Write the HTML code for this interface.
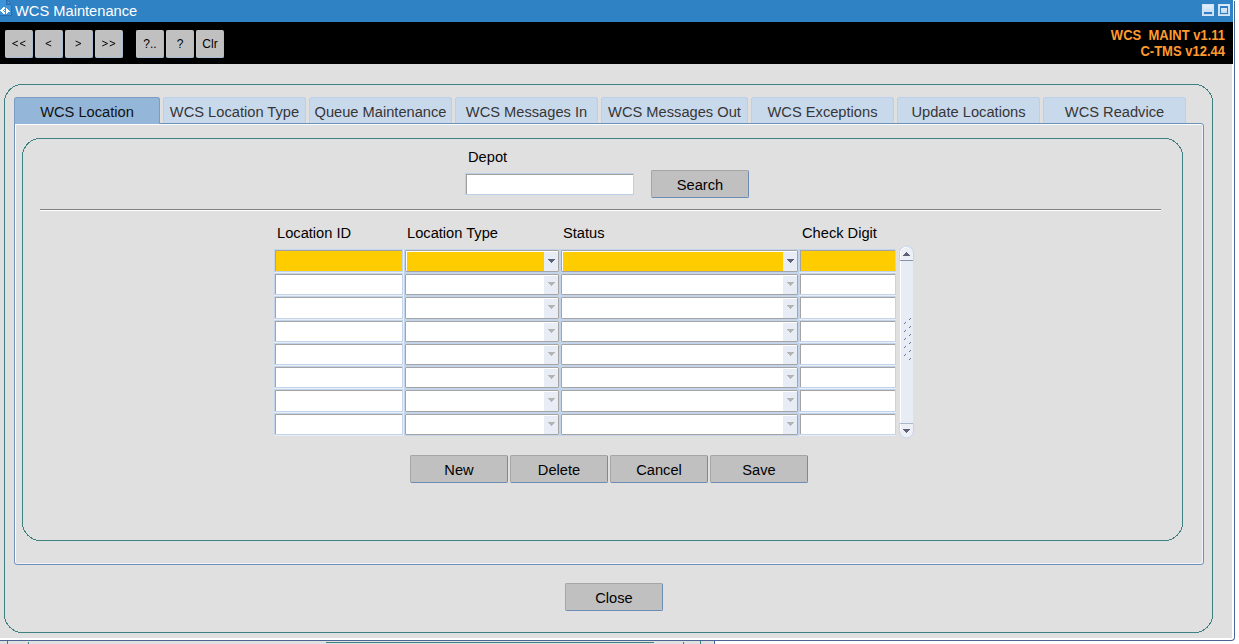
<!DOCTYPE html>
<html><head><meta charset="utf-8">
<style>
*{box-sizing:border-box;margin:0;padding:0}
html,body{width:1239px;height:644px;overflow:hidden;background:#ffffff;font-family:"Liberation Sans",sans-serif;font-size:14.67px;color:#000}
.a{position:absolute}
.tbtn{top:30px;width:28px;height:28px;background:#c0c0c0;border-radius:2px;border:1px solid;border-color:#c4c4c4 #a8bcd4 #a8bcd4 #c4c4c4;font-size:12px;text-align:center;line-height:26px;color:#000}
.tab{top:97px;height:26px;border-radius:3px 3px 0 0;background:#c9d9ec;border:1px solid #bccfe4;border-bottom:none;text-align:center;line-height:28px;color:#363636}
.tab.sel{background:#93b6d9;border-color:#7a9cc4;height:27px;color:#111}
.lbl{white-space:pre;line-height:17px}
.btn{background:#c0c0c0;border:1px solid;border-color:#a6a6a6 #6c8cb4 #6c8cb4 #a6a6a6;border-radius:2px;text-align:center;line-height:29px}
.ct{border:1px solid #c4d4ea;box-shadow:inset 1px 1px 0 #a4a4a4}
.cd{border:1px solid #c4d4ea}
.ci{position:absolute;left:0;top:0;right:0;bottom:0;border:1px solid #a4a4a4;border-radius:1px;box-shadow:inset 1px 1px 0 #fff}
.db{position:absolute;right:0;top:1px;width:14px;bottom:0;background:#e8ecf4}
.ar{position:absolute;left:4px;top:7px;display:block}
</style></head><body>
<div class="a" style="left:0;top:0;width:1235px;height:641px;background:#4a6494;border-radius:0 0 4px 0"></div>
<div class="a" style="left:0;top:0;width:1234px;height:640px;background:#ffffff;border-radius:0 0 3px 0"></div>
<div class="a" style="left:0;top:0;width:1232px;height:638px;background:#e0e0e0"></div>
<div class="a" style="left:1234px;top:0;width:1px;height:1px;background:#ffffff"></div>
<!-- bottom strip (other window) -->
<div class="a" style="left:0;top:641px;width:714px;height:3px;background:#e0e0e0"></div>
<div class="a" style="left:326px;top:642px;width:328px;height:1px;background:#3f8080"></div>
<div class="a" style="left:7px;top:641px;width:1px;height:3px;background:#3f8080"></div>
<div class="a" style="left:28px;top:642px;width:1px;height:2px;background:#3f8080"></div>
<div class="a" style="left:683px;top:642px;width:1px;height:2px;background:#3f8080"></div>
<div class="a" style="left:700px;top:641px;width:1px;height:3px;background:#3f8080"></div>
<div class="a" style="left:714px;top:641px;width:1px;height:3px;background:#4a6494"></div>

<!-- title bar -->
<div class="a" style="left:0;top:0;width:1233px;height:22px;background:#2f82c4"></div>
<svg class="a" style="left:0;top:0" width="12" height="17" viewBox="0 0 12 17" shape-rendering="crispEdges">
  <path d="M0 0H6V5H11V15H0Z" fill="#3b95d8"/>
  <path d="M0 15h12v1h-12zM11 5h1v10h-1zM6 0h1v5h-1zM6 4h5v1h-5z" fill="#2a6db0"/>
  <path d="M7 0h1v1h-1zM8 1h1v1h-1zM9 2h1v1h-1zM10 3h1v1h-1z" fill="#2a6db0"/>
  <path d="M8 2h1v1h-1z" fill="#5aa8e0"/>
  <path d="M3 7h2v1h-2zM2 8h3v1h-3zM1 9h2v3h-2zM3 9h1v1h-1zM3 11h1v1h-1zM2 12h3v1h-3zM3 13h2v1h-2zM0 10h1v1h-1z" fill="#ffffff"/>
  <path d="M4 10h1v1h-1z" fill="#ffffff"/>
  <path d="M6 8h1v6h-1zM7 9h1v4h-1zM8 10h1v2h-1zM9 10.5h1v1h-1z" fill="#ffffff"/>
</svg>
<div class="a" style="left:15px;top:3px;line-height:17px;color:#fff">WCS Maintenance</div>
<div class="a" style="left:1202px;top:4px;width:12px;height:12px;background:linear-gradient(#e2eefa,#bcd8f2);border:1px solid #d2e4f6"></div>
<div class="a" style="left:1204px;top:12px;width:8px;height:2px;background:#2f7cc2"></div>
<div class="a" style="left:1218px;top:4px;width:12px;height:12px;background:linear-gradient(#e2eefa,#bcd8f2);border:1px solid #d2e4f6"></div>
<div class="a" style="left:1220px;top:6px;width:8px;height:8px;border:1px solid #2f7cc2;border-top-width:2px"></div>

<!-- toolbar -->
<div class="a" style="left:0;top:22px;width:1233px;height:42px;background:#000"></div>
<div class="a tbtn" style="left:5px"></div>
<div class="a tbtn" style="left:35px"></div>
<div class="a tbtn" style="left:65px"></div>
<div class="a tbtn" style="left:95px"></div>
<svg class="a" style="left:0;top:0" width="130" height="64">
  <path d="M17.9 41L12.5 43.5L17.9 46M25.4 41L20.0 43.5L25.4 46M51.2 41L45.800000000000004 43.5L51.2 46M75.6 41L81.0 43.5L75.6 46M102.2 41L107.60000000000001 43.5L102.2 46M109.7 41L115.10000000000001 43.5L109.7 46" fill="none" stroke="#000" stroke-width="0.95"/>
</svg>
<div class="a tbtn" style="left:136px">?..</div>
<div class="a tbtn" style="left:166px">?</div>
<div class="a tbtn" style="left:196px">Clr</div>
<div class="a" style="right:14px;top:27px;text-align:right;color:#ff9a2e;font-weight:bold;font-size:13px;line-height:16px;white-space:pre;transform:scaleY(1.1);transform-origin:0 3px">WCS  MAINT v1.11</div>
<div class="a" style="right:14px;top:43px;text-align:right;color:#ff9a2e;font-weight:bold;font-size:13px;line-height:16px;white-space:pre;transform:scaleY(1.1);transform-origin:0 3px">C-TMS v12.44</div>

<!-- frames -->
<svg class="a" style="left:0;top:0" width="1239" height="644" shape-rendering="crispEdges">
  <rect x="4.5" y="84.5" width="1208" height="548" rx="18" ry="18" fill="none" stroke="#3f8080" stroke-width="1"/>
</svg>

<!-- tab panel -->
<div class="a" style="left:14px;top:123px;width:1190px;height:442px;border:1px solid #7090b8;border-radius:0 3px 3px 3px;box-shadow:inset 1px 1px 0 #fff,inset -1px -1px 0 #f0f4fa"></div>

<!-- tabs -->
<div class="a tab sel" style="left:14px;width:146px">WCS Location</div>
<div class="a" style="left:15px;top:123px;width:144px;height:1px;background:#93b6d9"></div>
<div class="a tab" style="left:163px;width:143px">WCS Location Type</div>
<div class="a tab" style="left:309px;width:143px">Queue Maintenance</div>
<div class="a tab" style="left:455px;width:143px">WCS Messages In</div>
<div class="a tab" style="left:601px;width:147px">WCS Messages Out</div>
<div class="a tab" style="left:751px;width:143px">WCS Exceptions</div>
<div class="a tab" style="left:897px;width:143px">Update Locations</div>
<div class="a tab" style="left:1043px;width:143px">WCS Readvice</div>

<svg class="a" style="left:0;top:0" width="1239" height="644" shape-rendering="crispEdges">
  <rect x="22.5" y="138.5" width="1160" height="402" rx="18" ry="18" fill="none" stroke="#3f8080" stroke-width="1"/>
</svg>

<div class="a lbl" style="left:468px;top:149px">Depot</div>
<div class="a" style="left:465px;top:173px;width:169px;height:22px;background:#fff;border:1px solid #bcd0ea;box-shadow:inset 1px 1px 0 #a0a0a0"></div>
<div class="a btn" style="left:651px;top:170px;width:98px;height:28px">Search</div>
<div class="a" style="left:40px;top:209px;width:1121px;height:1px;background:#808080"></div>
<div class="a" style="left:40px;top:210px;width:1121px;height:1px;background:#fff"></div>

<div class="a lbl" style="left:277px;top:225px">Location ID</div>
<div class="a lbl" style="left:407px;top:225px">Location Type</div>
<div class="a lbl" style="left:563px;top:225px">Status</div>
<div class="a lbl" style="left:802px;top:225px">Check Digit</div>

<div class="a" style="left:274px;top:249px;width:622px;height:187px;background:#e8eef6"></div>
<div class="a ct" style="left:274px;top:249px;width:129px;height:23px;background:#ffcc00"></div>
<div class="a cd" style="left:404px;top:249px;width:156px;height:24px"><div class="ci" style="background:#ffcc00"><div class="db"><svg class="ar" style="top:7px" width="7" height="4" shape-rendering="crispEdges"><path d="M0 0h7v1h-7zM1 1h5v1h-5zM2 2h3v1h-3zM3 3h1v1h-1z" fill="#5c6078"/></svg></div></div></div>
<div class="a cd" style="left:560px;top:249px;width:239px;height:24px"><div class="ci" style="background:#ffcc00"><div class="db"><svg class="ar" style="top:7px" width="7" height="4" shape-rendering="crispEdges"><path d="M0 0h7v1h-7zM1 1h5v1h-5zM2 2h3v1h-3zM3 3h1v1h-1z" fill="#5c6078"/></svg></div></div></div>
<div class="a ct" style="left:799px;top:249px;width:97px;height:23px;background:#ffcc00"></div>
<div class="a ct" style="left:274px;top:273px;width:129px;height:22px;background:#ffffff"></div>
<div class="a cd" style="left:404px;top:273px;width:156px;height:23px"><div class="ci" style="background:#ffffff"><div class="db"><svg class="ar" style="top:6px" width="7" height="4" shape-rendering="crispEdges"><path d="M0 0h7v1h-7zM1 1h5v1h-5zM2 2h3v1h-3zM3 3h1v1h-1z" fill="#b4b4b4"/></svg></div></div></div>
<div class="a cd" style="left:560px;top:273px;width:239px;height:23px"><div class="ci" style="background:#ffffff"><div class="db"><svg class="ar" style="top:6px" width="7" height="4" shape-rendering="crispEdges"><path d="M0 0h7v1h-7zM1 1h5v1h-5zM2 2h3v1h-3zM3 3h1v1h-1z" fill="#b4b4b4"/></svg></div></div></div>
<div class="a ct" style="left:799px;top:273px;width:97px;height:22px;background:#ffffff"></div>
<div class="a ct" style="left:274px;top:296px;width:129px;height:23px;background:#ffffff"></div>
<div class="a cd" style="left:404px;top:296px;width:156px;height:24px"><div class="ci" style="background:#ffffff"><div class="db"><svg class="ar" style="top:6px" width="7" height="4" shape-rendering="crispEdges"><path d="M0 0h7v1h-7zM1 1h5v1h-5zM2 2h3v1h-3zM3 3h1v1h-1z" fill="#b4b4b4"/></svg></div></div></div>
<div class="a cd" style="left:560px;top:296px;width:239px;height:24px"><div class="ci" style="background:#ffffff"><div class="db"><svg class="ar" style="top:6px" width="7" height="4" shape-rendering="crispEdges"><path d="M0 0h7v1h-7zM1 1h5v1h-5zM2 2h3v1h-3zM3 3h1v1h-1z" fill="#b4b4b4"/></svg></div></div></div>
<div class="a ct" style="left:799px;top:296px;width:97px;height:23px;background:#ffffff"></div>
<div class="a ct" style="left:274px;top:320px;width:129px;height:22px;background:#ffffff"></div>
<div class="a cd" style="left:404px;top:320px;width:156px;height:23px"><div class="ci" style="background:#ffffff"><div class="db"><svg class="ar" style="top:6px" width="7" height="4" shape-rendering="crispEdges"><path d="M0 0h7v1h-7zM1 1h5v1h-5zM2 2h3v1h-3zM3 3h1v1h-1z" fill="#b4b4b4"/></svg></div></div></div>
<div class="a cd" style="left:560px;top:320px;width:239px;height:23px"><div class="ci" style="background:#ffffff"><div class="db"><svg class="ar" style="top:6px" width="7" height="4" shape-rendering="crispEdges"><path d="M0 0h7v1h-7zM1 1h5v1h-5zM2 2h3v1h-3zM3 3h1v1h-1z" fill="#b4b4b4"/></svg></div></div></div>
<div class="a ct" style="left:799px;top:320px;width:97px;height:22px;background:#ffffff"></div>
<div class="a ct" style="left:274px;top:343px;width:129px;height:22px;background:#ffffff"></div>
<div class="a cd" style="left:404px;top:343px;width:156px;height:23px"><div class="ci" style="background:#ffffff"><div class="db"><svg class="ar" style="top:6px" width="7" height="4" shape-rendering="crispEdges"><path d="M0 0h7v1h-7zM1 1h5v1h-5zM2 2h3v1h-3zM3 3h1v1h-1z" fill="#b4b4b4"/></svg></div></div></div>
<div class="a cd" style="left:560px;top:343px;width:239px;height:23px"><div class="ci" style="background:#ffffff"><div class="db"><svg class="ar" style="top:6px" width="7" height="4" shape-rendering="crispEdges"><path d="M0 0h7v1h-7zM1 1h5v1h-5zM2 2h3v1h-3zM3 3h1v1h-1z" fill="#b4b4b4"/></svg></div></div></div>
<div class="a ct" style="left:799px;top:343px;width:97px;height:22px;background:#ffffff"></div>
<div class="a ct" style="left:274px;top:366px;width:129px;height:22px;background:#ffffff"></div>
<div class="a cd" style="left:404px;top:366px;width:156px;height:23px"><div class="ci" style="background:#ffffff"><div class="db"><svg class="ar" style="top:6px" width="7" height="4" shape-rendering="crispEdges"><path d="M0 0h7v1h-7zM1 1h5v1h-5zM2 2h3v1h-3zM3 3h1v1h-1z" fill="#b4b4b4"/></svg></div></div></div>
<div class="a cd" style="left:560px;top:366px;width:239px;height:23px"><div class="ci" style="background:#ffffff"><div class="db"><svg class="ar" style="top:6px" width="7" height="4" shape-rendering="crispEdges"><path d="M0 0h7v1h-7zM1 1h5v1h-5zM2 2h3v1h-3zM3 3h1v1h-1z" fill="#b4b4b4"/></svg></div></div></div>
<div class="a ct" style="left:799px;top:366px;width:97px;height:22px;background:#ffffff"></div>
<div class="a ct" style="left:274px;top:389px;width:129px;height:23px;background:#ffffff"></div>
<div class="a cd" style="left:404px;top:389px;width:156px;height:24px"><div class="ci" style="background:#ffffff"><div class="db"><svg class="ar" style="top:6px" width="7" height="4" shape-rendering="crispEdges"><path d="M0 0h7v1h-7zM1 1h5v1h-5zM2 2h3v1h-3zM3 3h1v1h-1z" fill="#b4b4b4"/></svg></div></div></div>
<div class="a cd" style="left:560px;top:389px;width:239px;height:24px"><div class="ci" style="background:#ffffff"><div class="db"><svg class="ar" style="top:6px" width="7" height="4" shape-rendering="crispEdges"><path d="M0 0h7v1h-7zM1 1h5v1h-5zM2 2h3v1h-3zM3 3h1v1h-1z" fill="#b4b4b4"/></svg></div></div></div>
<div class="a ct" style="left:799px;top:389px;width:97px;height:23px;background:#ffffff"></div>
<div class="a ct" style="left:274px;top:413px;width:129px;height:22px;background:#ffffff"></div>
<div class="a cd" style="left:404px;top:413px;width:156px;height:23px"><div class="ci" style="background:#ffffff"><div class="db"><svg class="ar" style="top:6px" width="7" height="4" shape-rendering="crispEdges"><path d="M0 0h7v1h-7zM1 1h5v1h-5zM2 2h3v1h-3zM3 3h1v1h-1z" fill="#b4b4b4"/></svg></div></div></div>
<div class="a cd" style="left:560px;top:413px;width:239px;height:23px"><div class="ci" style="background:#ffffff"><div class="db"><svg class="ar" style="top:6px" width="7" height="4" shape-rendering="crispEdges"><path d="M0 0h7v1h-7zM1 1h5v1h-5zM2 2h3v1h-3zM3 3h1v1h-1z" fill="#b4b4b4"/></svg></div></div></div>
<div class="a ct" style="left:799px;top:413px;width:97px;height:22px;background:#ffffff"></div>

<!-- scrollbar -->
<svg class="a" style="left:0;top:0" width="1239" height="644">
  <rect x="900" y="258" width="13" height="168" fill="#e8ecf4"/>
  <rect x="900" y="258" width="1" height="168" fill="#ffffff"/>
  <path d="M899.5 260.5V253A7 7 0 0 1 913.5 253V260.5Z" fill="#eceff6" stroke="#c4d4ea" stroke-width="1"/>
  <path d="M900.5 260V253A6 6 0 0 1 906.5 247" fill="none" stroke="#ffffff" stroke-width="1"/>
  <path d="M900 260.5H913" stroke="#8a94a8" stroke-width="1"/>
  <path d="M899.5 423.5V431A7 7 0 0 0 913.5 431V423.5Z" fill="#eceff6" stroke="#c4d4ea" stroke-width="1"/>
  <path d="M900.5 424V431" fill="none" stroke="#ffffff" stroke-width="1"/>
  <path d="M900 423.5H913" stroke="#a8b8cc" stroke-width="1"/>
  <g shape-rendering="crispEdges">
  <path d="M903 255h7v1h-7zM904 254h5v1h-5zM905 253h3v1h-3zM906 252h1v1h-1z" fill="#5c6078"/>
  <path d="M903 429h7v1h-7zM904 430h5v1h-5zM905 431h3v1h-3zM906 432h1v1h-1z" fill="#5c6078"/>
  <path d="M909 319h1v1h-1zM910 318h1v1h-1z" fill="#6078a0"/><path d="M909 327h1v1h-1zM910 326h1v1h-1z" fill="#6078a0"/><path d="M909 335h1v1h-1zM910 334h1v1h-1z" fill="#6078a0"/><path d="M909 343h1v1h-1zM910 342h1v1h-1z" fill="#6078a0"/><path d="M909 351h1v1h-1zM910 350h1v1h-1z" fill="#6078a0"/><path d="M909 359h1v1h-1zM910 358h1v1h-1z" fill="#6078a0"/><path d="M904 323h1v1h-1zM905 322h1v1h-1z" fill="#6078a0"/><path d="M904 331h1v1h-1zM905 330h1v1h-1z" fill="#6078a0"/><path d="M904 339h1v1h-1zM905 338h1v1h-1z" fill="#6078a0"/><path d="M904 347h1v1h-1zM905 346h1v1h-1z" fill="#6078a0"/><path d="M904 355h1v1h-1zM905 354h1v1h-1z" fill="#6078a0"/></g>
</svg>

<div class="a btn" style="left:410px;top:455px;width:98px;height:28px">New</div>
<div class="a btn" style="left:510px;top:455px;width:98px;height:28px">Delete</div>
<div class="a btn" style="left:610px;top:455px;width:98px;height:28px">Cancel</div>
<div class="a btn" style="left:710px;top:455px;width:98px;height:28px">Save</div>

<div class="a btn" style="left:565px;top:583px;width:98px;height:28px">Close</div>
</body></html>
